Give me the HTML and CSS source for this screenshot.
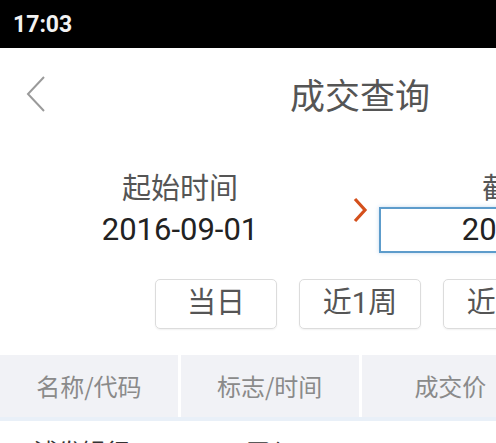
FILE: index.html
```
<!DOCTYPE html>
<html lang="zh-CN">
<head>
<meta charset="utf-8">
<title>成交查询</title>
<link rel="stylesheet" href="styles.css">
</head>
<body>
<div class="page">
  <div class="status">17:03</div>
  <div class="nav">
    <svg class="back" width="20" height="36" viewBox="0 0 20 36"><polyline points="18,1 2,18 18,35" fill="none" stroke="#9a9a9a" stroke-width="2"/></svg>
    <div class="title">成交查询</div>
  </div>
  <div class="dates">
    <div class="col">
      <div class="label">起始时间</div>
      <div class="value">2016-09-01</div>
    </div>
    <div class="col">
      <div class="label">截止时间</div>
      <div class="value active">
        <svg class="arrow" width="16" height="26" viewBox="0 0 16 26"><polyline points="3,2 13,13 3,24" fill="none" stroke="#d4501c" stroke-width="3.2"/></svg>
        2016-09-30
      </div>
    </div>
  </div>
  <div class="quick">
    <div class="btn">当日</div>
    <div class="btn">近1周</div>
    <div class="btn">近1月</div>
    <div class="btn">近3月</div>
  </div>
  <div class="thead">
    <div class="th">名称/代码</div>
    <div class="th">标志/时间</div>
    <div class="th">成交价</div>
    <div class="th">成交量</div>
  </div>
  <div class="row">
    <div class="td">浦发银行A</div>
    <div class="td">买入</div>
    <div class="td">16.20</div>
    <div class="td">1000</div>
  </div>
</div>
</body>
</html>
```
FILE: styles.css
```
html, body {
  margin: 0;
  padding: 0;
  overflow: hidden;
  background: #fff;
}
.page {
  width: 720px;
  font-family: Roboto, "Noto Sans CJK SC", sans-serif;
}
.status {
  height: 48px;
  background: #000;
  color: #f2f2f2;
  font-weight: bold;
  font-size: 23px;
  line-height: 50px;
  padding-left: 13px;
}
.nav {
  height: 92px;
  position: relative;
  display: flex;
  align-items: center;
  justify-content: center;
}
.back {
  position: absolute;
  left: 26px;
  top: 28px;
}
.title {
  font-family: "Noto Sans CJK SC", sans-serif;
  font-size: 35px;
  color: #555;
  line-height: 40px;
}
.dates {
  display: grid;
  grid-template-columns: 360px 360px;
  padding-top: 28px;
}
.col {
  display: flex;
  flex-direction: column;
  align-items: center;
}
.label {
  font-family: "Noto Sans CJK SC", sans-serif;
  font-size: 29px;
  line-height: 36px;
  color: #555;
  margin-bottom: 3px;
}
.value {
  position: relative;
  box-sizing: border-box;
  width: 322px;
  height: 46px;
  border: 2px solid transparent;
  font-size: 31px;
  line-height: 42px;
  color: #222;
  text-align: center;
}
.value.active {
  border-color: #5d9ccb;
  box-shadow: 0 0 4px rgba(120, 170, 220, 0.45);
}
.arrow {
  position: absolute;
  left: -29px;
  top: -12px;
}
.quick {
  display: flex;
  gap: 22px;
  padding-left: 155px;
  margin-top: 26px;
}
.btn {
  box-sizing: border-box;
  width: 122px;
  height: 50px;
  border: 1px solid #dcdcdc;
  border-radius: 5px;
  box-shadow: 0 1px 2px rgba(0, 0, 0, 0.06);
  font-family: Roboto, "Noto Sans CJK SC", sans-serif;
  font-size: 29px;
  line-height: 47px;
  color: #555;
  text-align: center;
}
.thead {
  display: flex;
  gap: 3px;
  margin-top: 26px;
  background: #fff;
  border-bottom: 4px solid #e9f0f8;
}
.th {
  width: 178px;
  height: 62px;
  background: #f1f2f6;
  font-family: "Noto Sans CJK SC", sans-serif;
  font-size: 24px;
  line-height: 62px;
  color: #8a8a8a;
  text-align: center;
}
.row {
  display: flex;
  gap: 3px;
  padding-top: 15px;
}
.td {
  width: 178px;
  font-family: "Noto Sans CJK SC", sans-serif;
  font-size: 24px;
  line-height: 30px;
  color: #333;
  text-align: center;
}
```
